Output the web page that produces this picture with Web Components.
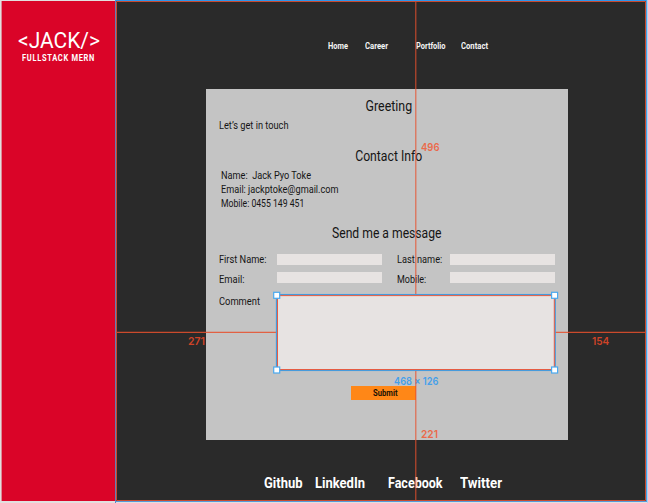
<!DOCTYPE html>
<html lang="en">
<head>
<meta charset="utf-8">
<title>Contact</title>
<style>
html,body{margin:0;padding:0}
body{width:648px;height:503px;overflow:hidden;background:#e2dfdf;font-family:Roboto,"Liberation Sans",sans-serif}
</style>
</head>
<body>
<contact-page></contact-page>
<script>
const define = (name, html, init) => {
  const t = document.createElement('template');
  t.innerHTML = html;
  customElements.define(name, class extends HTMLElement {
    constructor() {
      super();
      this.attachShadow({mode: 'open'}).appendChild(t.content.cloneNode(true));
    }
    connectedCallback() { if (init) init.call(this, this.shadowRoot); }
  });
};

/* A single line of text condensed to the width given in "w", at the size in "s". */
define('fit-text', `
<style>
:host{display:block;flex:none;line-height:1}
span{display:inline-block;white-space:pre;transform-origin:0 0;vertical-align:top}
</style><span><slot></slot></span>`, function (root) {
  const w = +this.getAttribute('w'), span = root.querySelector('span');
  this.style.fontSize = this.getAttribute('s') + 'px';
  this.style.height = this.getAttribute('s') + 'px';
  this.style.width = w + 'px';
  span.style.transform = 'scaleX(' + w / span.offsetWidth + ')';
  const exact = span.getBoundingClientRect().width;
  if (exact) span.style.transform = 'scaleX(' + (w / span.offsetWidth) * (w / exact) + ')';
});

define('side-brand', `
<style>
:host{display:flex;flex-direction:column;align-items:center;box-sizing:border-box;background:#da0428;color:#fff;padding:28.6px 0 0 0;border-left:1px solid #dc8b97}
.tag{font-weight:700;margin-top:3.2px;letter-spacing:.8px}
</style>
<fit-text w="82" s="21.5">&lt;JACK/&gt;</fit-text>
<fit-text class="tag" w="73" s="8.6">FULLSTACK MERN</fit-text>`);

define('top-nav', `
<style>
:host{display:flex;padding:41.6px 0 0 212.6px;height:46.1px;color:#f4f4f4;font-weight:700}
fit-text+fit-text{margin-left:17px}
fit-text.gap{margin-left:28px}
fit-text.last{margin-left:16px}
</style>
<fit-text w="20" s="8.7">Home</fit-text>
<fit-text w="23" s="8.7">Career</fit-text>
<fit-text class="gap" w="29.5" s="8.7">Portfolio</fit-text>
<fit-text class="last" w="27" s="8.7">Contact</fit-text>`);

define('text-field', `
<style>:host{display:block;width:104.7px;height:11.3px;background:#e7e3e2}</style>`);

define('submit-button', `
<style>:host{display:flex;justify-content:center;box-sizing:border-box;width:65px;height:14px;background:#ff8717;color:#1b1204;font-weight:700;padding:3.2px 0 0 4px}</style>
<fit-text w="24.5" s="8.4">Submit</fit-text>`);

define('contact-panel', `
<style>
:host{display:block;box-sizing:border-box;width:362.6px;height:351.6px;background:#c4c4c4;color:#151515;padding-top:10.6px;overflow:hidden}
.h{margin-left:auto;margin-right:auto}
.lets{margin:6.8px 0 0 13.6px}
.info{display:flex;flex-direction:column;gap:2.9px;margin:7.4px 0 0 15.6px}
.form{display:grid;grid-template-columns:57.5px 120px 53.2px 105px;grid-template-rows:11.3px 13px;row-gap:7px;margin:12.9px 0 0 13.8px}
.form fit-text{margin-top:1.2px}
.form .low{margin-top:3.4px}
.message{display:flex;margin:10.3px 0 0 13.8px;height:75.2px}
.message fit-text{margin-top:2px}
.area{margin-left:17px;width:277.5px;height:75.2px;background:#e7e3e2}
submit-button{margin:15.6px 0 0 145.6px}
</style>
<fit-text class="h" style="transform:translateX(1.6px)" w="46.5" s="14.6">Greeting</fit-text>
<fit-text class="lets" w="69.5" s="10.8">Let’s get in touch</fit-text>
<fit-text class="h" style="margin-top:18px;transform:translateX(2.2px)" w="67" s="14.6">Contact Info</fit-text>
<div class="info">
<fit-text w="90" s="10.8">Name:  Jack Pyo Toke</fit-text>
<fit-text w="117.5" s="10.8">Email: jackptoke@gmail.com</fit-text>
<fit-text w="83.3" s="10.8">Mobile: 0455 149 451</fit-text>
</div>
<fit-text class="h" style="margin-top:16.4px" w="109.5" s="14.6">Send me a message</fit-text>
<div class="form">
<fit-text w="47.5" s="10.8">First Name:</fit-text><text-field></text-field>
<fit-text w="45.3" s="10.8">Last name:</fit-text><text-field></text-field>
<fit-text class="low" w="25.5" s="10.8">Email:</fit-text><text-field></text-field>
<fit-text class="low" w="29.3" s="10.8">Mobile:</fit-text><text-field></text-field>
</div>
<div class="message"><fit-text w="41" s="10.8">Comment</fit-text><div class="area"></div></div>
<submit-button></submit-button>`);

define('link-footer', `
<style>
:host{display:flex;padding:36.6px 0 0 148.8px;color:#fff;font-weight:700}
</style>
<fit-text w="38.5" s="14.4">Github</fit-text>
<fit-text style="margin-left:12.5px" w="50" s="14.4">LinkedIn</fit-text>
<fit-text style="margin-left:23.3px" w="54.5" s="14.4">Facebook</fit-text>
<fit-text style="margin-left:17.5px" w="42" s="14.4">Twitter</fit-text>`);

/* Measuring guides, selection frames and handles that lie over the page. */
define('measure-overlay', `
<style>
:host{position:absolute;inset:0;pointer-events:none;font-family:Inter,sans-serif;font-weight:600;color:#eb6a4b}
svg{position:absolute;left:0;top:0}
fit-text{position:absolute}
.dark{color:#cf4327}
.size{color:#45a0ea}
</style>
<fit-text style="left:420.5px;top:142.8px" w="18.5" s="10.8">496</fit-text>
<fit-text class="dark" style="left:188px;top:337px" w="17" s="10.8">271</fit-text>
<fit-text class="dark" style="left:592px;top:337.4px" w="17.3" s="10.8">154</fit-text>
<fit-text style="left:420.5px;top:430.2px" w="17" s="10.8">221</fit-text>
<fit-text class="size" style="left:393.5px;top:377.2px" w="44.3" s="10.8">468 × 126</fit-text>
<svg width="648" height="503" fill="none">
<path d="M115.5 503V0" stroke="#657db4"/>
<path d="M115 .5H648" stroke="#2e96ed" stroke-width="1.2"/>
<path d="M647.5 0V503" stroke="#a8d4f5"/>
<path d="M646.5 0V502" stroke="#4b9fe3"/>
<path d="M115 501.5H647" stroke="#5599da"/>
<path d="M116.5 1.5H645.5V500.5H116.5Z" stroke="#c84a2f"/>
<path d="M415.8 2V295M415.8 370V500M117 332.4H277M555 332.4H645" stroke="#e8502d" stroke-opacity=".85" stroke-width="1.1"/>
<rect x="276.6" y="294.7" width="278.5" height="75.6" stroke="#469bdc" stroke-width="1.5"/>
<rect x="277.5" y="295.6" width="276.8" height="73.9" stroke="#e65c43"/>
<g fill="#fff" stroke="#4aa9ef" stroke-width="1.2">
<rect x="273.7" y="292.3" width="6" height="6"/><rect x="551.6" y="292.3" width="6" height="6"/>
<rect x="273.7" y="367" width="6" height="6"/><rect x="551.6" y="367" width="6" height="6"/>
</g>
</svg>`);

define('contact-page', `
<style>
:host{display:grid;grid-template-columns:115px 532px;grid-template-rows:501px;position:relative;width:648px;height:503px}
side-brand{margin:1px 0 0 1px}
main{background:#2a2a2a}
contact-panel{margin:1px 0 0 90.6px}
</style>
<side-brand></side-brand>
<main><top-nav></top-nav><contact-panel></contact-panel><link-footer></link-footer></main>
<measure-overlay></measure-overlay>`);
</script>
</body>
</html>
